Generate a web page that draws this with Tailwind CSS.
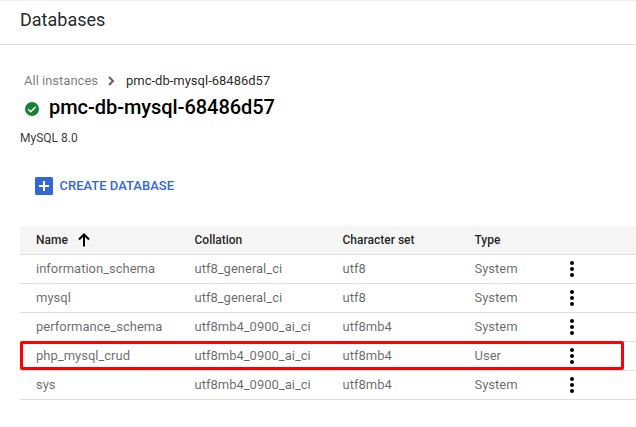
<!DOCTYPE html>
<html lang="en">
<head>
<meta charset="utf-8">
<title>Databases</title>
<script src="https://cdn.jsdelivr.net/npm/@tailwindcss/browser@4"></script>
</head>
<body class="w-[636px] h-[427px] overflow-hidden bg-white font-[Roboto,sans-serif] text-[13px] text-black">
<header class="h-[45px] border-t border-t-[#f0f0f0] border-b border-b-[#e0e0e0] pl-5 pt-[5px]">
  <h1 class="text-[18px] leading-7 text-black/87"><span>Databases</span></h1>
</header>
<main class="pl-5">
  <nav class="mt-[26px] ml-1 flex h-5 items-center leading-5">
    <span class="w-[84px] text-black/54">All instances</span>
    <svg class="h-[10px] w-[7px] text-[#616161]" viewBox="0 0 7 10" fill="none" stroke="currentColor" stroke-width="2"><path d="M1 1l4 4-4 4"/></svg>
    <span class="ml-[11px] text-black/87">pmc-db-mysql-68486d57</span>
  </nav>
  <div class="flex h-8 items-center">
    <svg class="mt-[3px] ml-[5px] h-[14px] w-[14px]" viewBox="0 0 14 14"><circle cx="7" cy="7" r="7" fill="#188038"/><path d="M3.2 7.3l2.5 2.5 5.1-5.1" fill="none" stroke="#fff" stroke-width="1.4"/></svg>
    <h2 class="ml-[10px] text-[20px] leading-8 font-medium tracking-[-0.04px] text-black">pmc-db-mysql-68486d57</h2>
  </div>
  <p class="mt-[5px] h-5 text-[12px] leading-5 text-black/80">MySQL 8.0</p>
  <button class="mt-[28px] ml-[15px] flex h-[20px] items-center font-medium text-[#3367d6]">
    <svg class="h-[18px] w-[18px]" viewBox="0 0 18 18"><rect width="18" height="18" rx="1.5" fill="#3367d6"/><path d="M4 9h10M9 4v10" stroke="#fff" stroke-width="2"/></svg>
    <span class="ml-[6.5px] leading-5">CREATE DATABASE</span>
  </button>
  <div class="relative mt-[30px]">
    <div class="grid h-[29px] grid-cols-[158.5px_148px_132px_1fr] items-center border-b border-[#e0e0e0] bg-[#f5f5f5] pl-4 text-[12px] font-medium text-black/87">
      <div class="flex items-center"><span>Name</span><svg class="ml-[10px] h-[14px] w-[12px]" viewBox="0 0 12 14" fill="none" stroke="#000" stroke-width="2"><path d="M6 13.5V2M1 6.5l5-5 5 5"/></svg></div>
      <div>Collation</div><div>Character set</div><div>Type</div>
    </div>
    <div id="rows"></div>
    <div class="absolute top-[115px] left-0 h-[29px] w-[604px] rounded-[2px] border-3 border-[#ff0000]"></div>
  </div>
</main>
<script>
const rows = [
  ['information_schema', 'utf8_general_ci', 'utf8', 'System'],
  ['mysql', 'utf8_general_ci', 'utf8', 'System'],
  ['performance_schema', 'utf8mb4_0900_ai_ci', 'utf8mb4', 'System'],
  ['php_mysql_crud', 'utf8mb4_0900_ai_ci', 'utf8mb4', 'User'],
  ['sys', 'utf8mb4_0900_ai_ci', 'utf8mb4', 'System'],
];
document.getElementById('rows').innerHTML = rows.map(r => `
  <div class="grid h-[29px] grid-cols-[158.5px_148px_132px_1fr] items-center border-b border-[#e0e0e0] pl-4 text-[13px] text-black/60">
    ${r.map((c, i) => i < 3 ? `<div>${c}</div>` : `<div class="flex items-center"><span class="w-[95.5px]">${c}</span><svg class="h-4 w-1" viewBox="0 0 4 16" fill="#000"><circle cx="2" cy="2" r="2"/><circle cx="2" cy="8" r="2"/><circle cx="2" cy="14" r="2"/></svg></div>`).join('')}
  </div>`).join('');
</script>
</body>
</html>
